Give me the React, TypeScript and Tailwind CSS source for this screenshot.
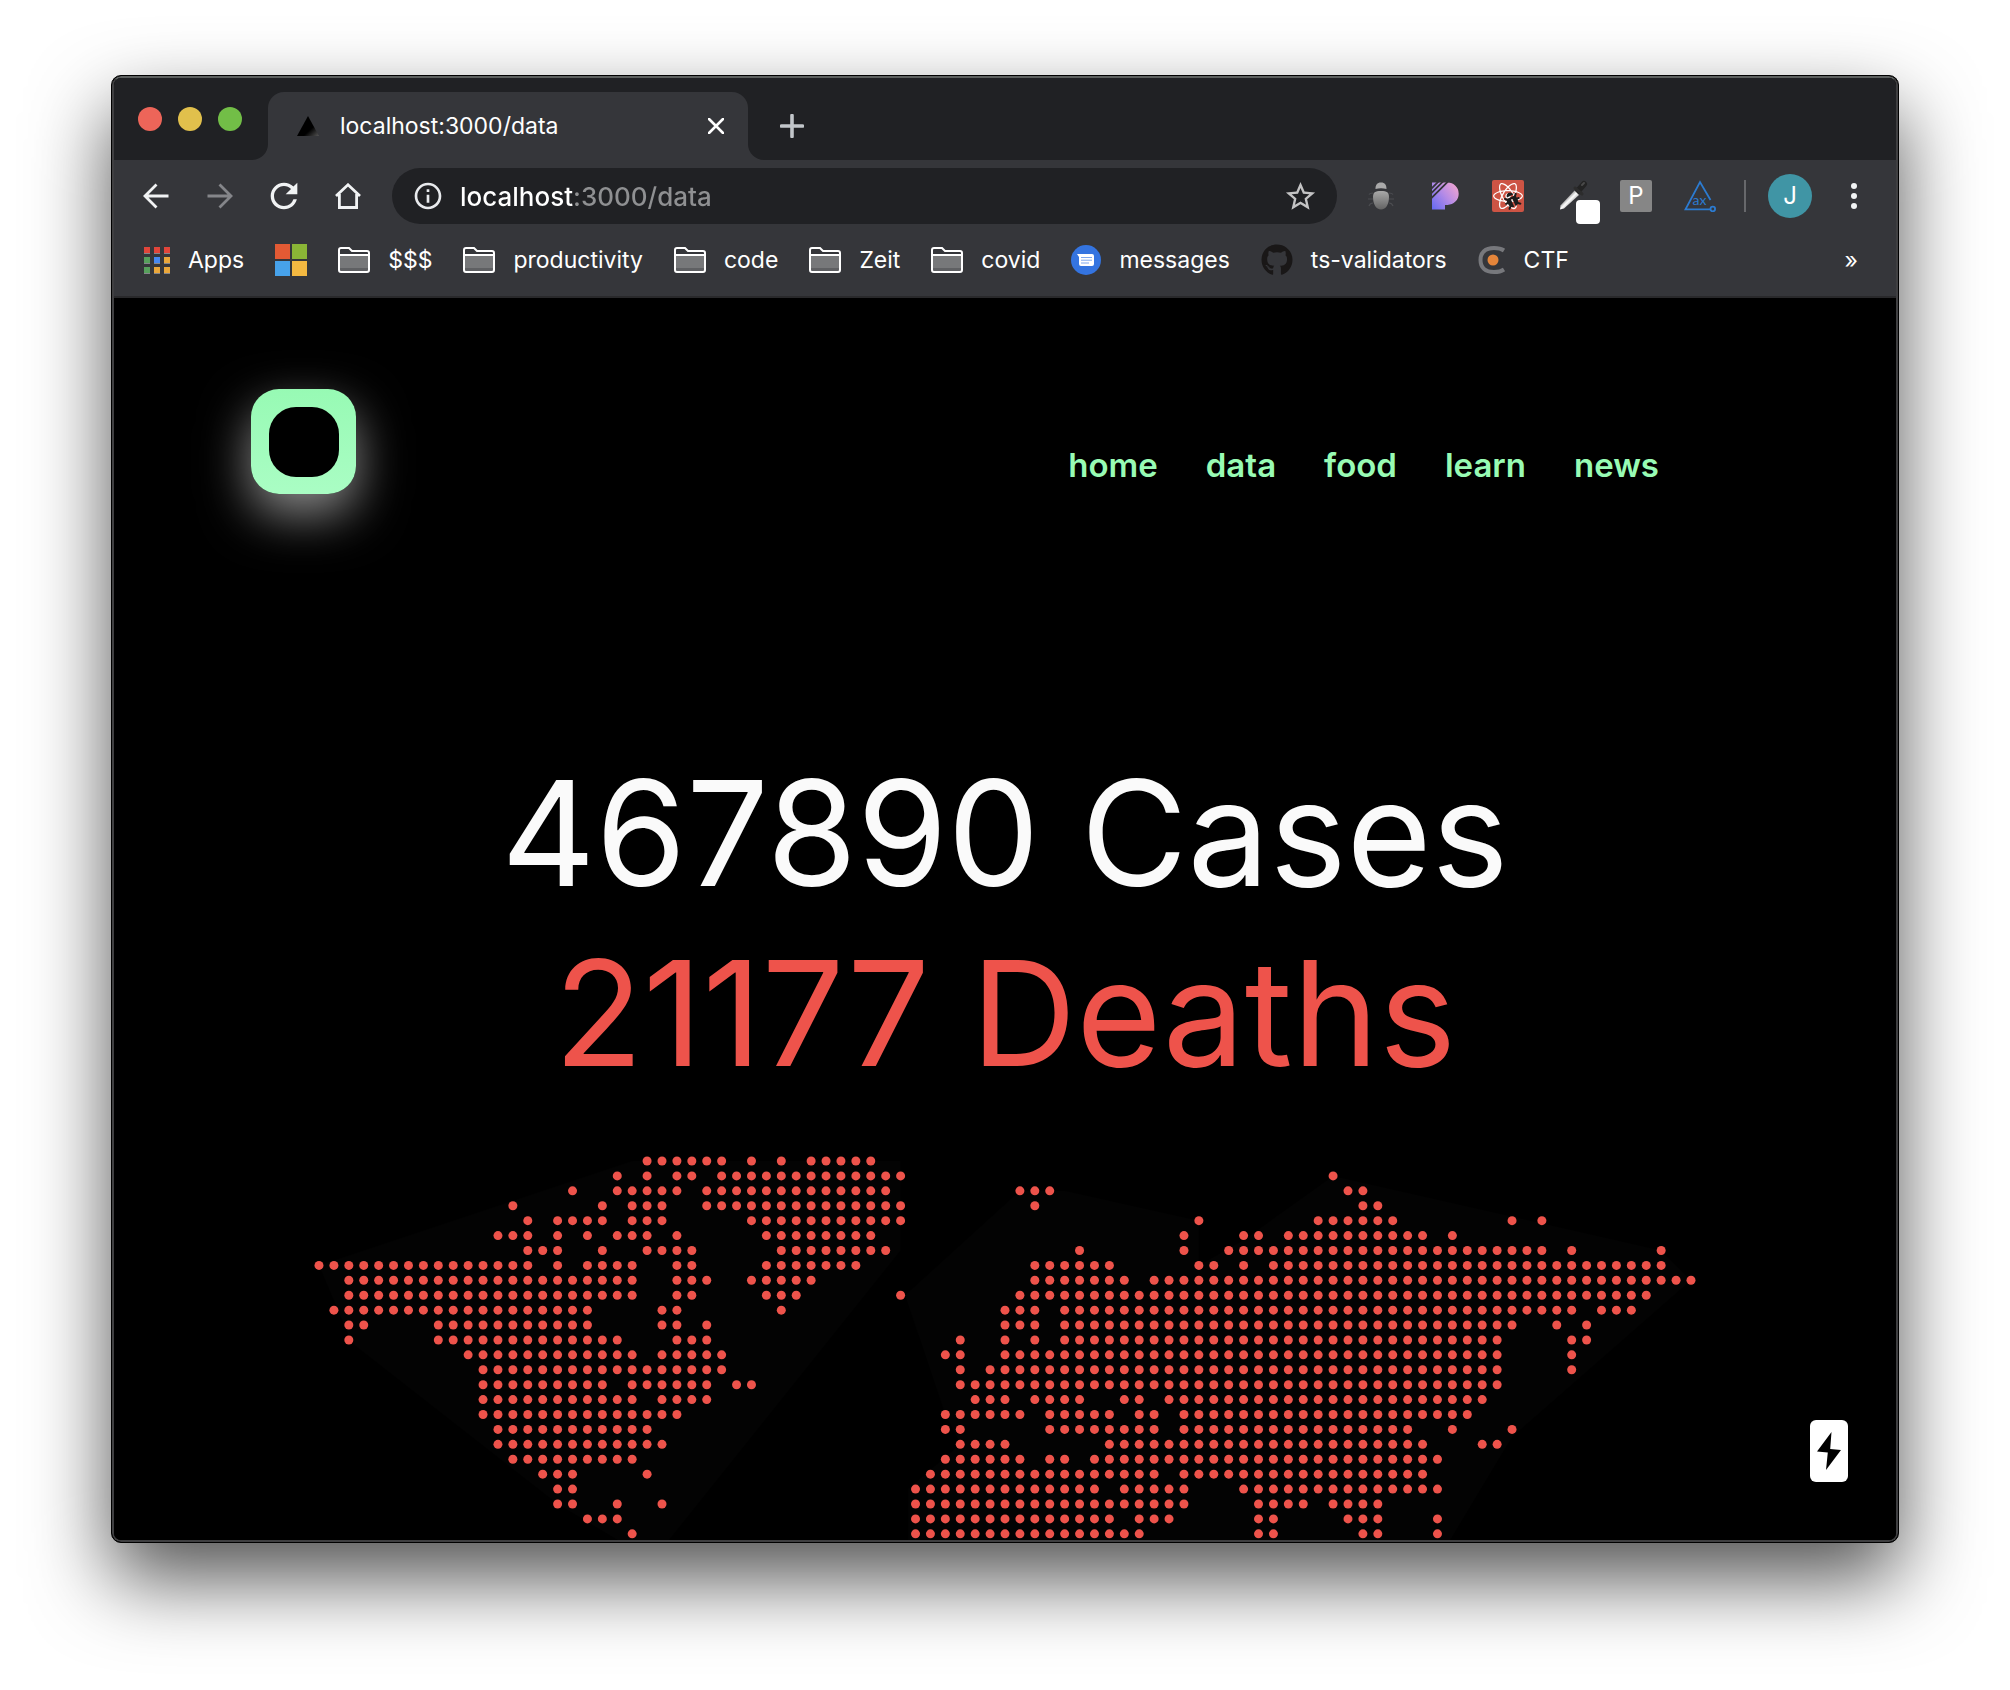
import React from 'react';
import { FaGithub, FaReact, FaBug } from 'react-icons/fa';
import { MdStarBorder, MdRefresh, MdOutlineInfo } from 'react-icons/md';

/* Land cells of the dotted world map: one entry per row, each a list of [first, last] columns. */
const MAP_ROWS: number[][][] = [
  [[22, 27], [29, 29], [31, 31], [33, 37]],
  [[20, 20], [22, 22], [24, 25], [27, 39], [68, 68]],
  [[17, 17], [20, 24], [26, 38], [47, 49], [69, 70]],
  [[13, 13], [19, 19], [21, 23], [26, 39], [48, 48], [70, 71]],
  [[14, 14], [16, 19], [21, 23], [29, 39], [59, 59], [67, 72], [80, 80], [82, 82]],
  [[12, 14], [16, 16], [18, 18], [20, 22], [24, 24], [30, 37], [58, 58], [62, 63], [65, 74], [76, 76]],
  [[14, 16], [19, 19], [22, 25], [31, 38], [51, 51], [58, 58], [61, 82], [84, 84], [90, 90]],
  [[0, 14], [16, 16], [18, 21], [24, 25], [30, 36], [48, 53], [59, 60], [62, 62], [64, 90]],
  [[2, 21], [24, 26], [29, 33], [48, 54], [56, 92]],
  [[2, 21], [24, 25], [30, 32], [39, 39], [47, 89]],
  [[1, 18], [23, 24], [31, 31], [46, 48], [50, 84], [86, 88]],
  [[2, 3], [8, 18], [23, 24], [26, 26], [46, 48], [50, 80], [83, 83], [85, 85]],
  [[2, 2], [8, 20], [24, 26], [43, 43], [46, 46], [48, 48], [50, 79], [84, 85]],
  [[10, 21], [23, 27], [42, 43], [46, 79], [84, 84]],
  [[11, 27], [43, 43], [45, 79], [84, 84]],
  [[11, 19], [21, 26], [28, 29], [43, 79]],
  [[11, 21], [23, 26], [44, 46], [48, 51], [54, 55], [57, 78]],
  [[11, 24], [42, 47], [49, 53], [55, 56], [58, 77]],
  [[12, 22], [42, 43], [49, 56], [58, 73], [76, 76], [80, 80]],
  [[12, 23], [43, 46], [53, 74], [78, 79]],
  [[13, 21], [42, 47], [49, 50], [52, 75]],
  [[15, 17], [22, 22], [41, 56], [58, 74]],
  [[16, 17], [40, 52], [54, 58], [62, 75]],
  [[16, 17], [20, 20], [23, 23], [40, 58], [63, 66], [68, 71]],
  [[18, 20], [40, 53], [55, 57], [63, 64], [69, 71], [75, 75]],
  [[21, 21], [40, 55], [63, 64], [70, 71], [75, 75]],
];

function WorldMap() {
  const pitch = 14.913;
  const dots: React.ReactElement[] = [];
  MAP_ROWS.forEach((ranges, row) =>
    ranges.forEach(([from, to]) => {
      for (let col = from; col <= to; col++) {
        dots.push(<circle key={`${row}-${col}`} cx={6 + col * pitch} cy={6 + row * pitch} r="4.5" />);
      }
    }),
  );
  const region = (points: number[][]) =>
    points.map(([c, r]) => `${6 + c * pitch},${6 + r * pitch}`).join(' ');
  return (
    <svg viewBox="0 0 1384 394" className="w-full max-w-[1384px] shrink-0" role="img" aria-label="World map">
      <g fill="#030303">
        <polygon points={region([[21, 0], [39, 0], [39, 6], [23, 26], [21, 26], [16, 23], [2.2, 12.2], [0, 7]])} />
        <polygon
          points={region([
            [39.3, 9], [47, 2], [50, 2], [59, 4], [59, 7], [62, 5.3], [68, 1], [90, 6], [92, 8],
            [80, 18.5], [75.5, 26], [39.5, 26], [39.5, 22], [43, 19], [42, 17],
          ])}
        />
      </g>
      <g fill="#ee534b">{dots}</g>
    </svg>
  );
}

function FolderIcon() {
  return (
    <svg viewBox="0 0 32 26" className="h-[26px] w-8 shrink-0" fill="none">
      <path d="M1 3a2 2 0 0 1 2-2h8l3 3h15a2 2 0 0 1 2 2v17a2 2 0 0 1-2 2H3a2 2 0 0 1-2-2z" fill="#35363a" />
      <path d="M2 9h28v15H2z" fill="#77787a" />
      <path d="M2 21h28v3H2z" fill="#5f6063" />
      <path d="M1 3a2 2 0 0 1 2-2h8l3 3h15a2 2 0 0 1 2 2v17a2 2 0 0 1-2 2H3a2 2 0 0 1-2-2zM1 8h30" stroke="#fff" strokeWidth="2" />
    </svg>
  );
}

function AppsIcon() {
  const colors = ['#e0453a', '#e0453a', '#e0453a', '#57a05c', '#4688f1', '#e9a63a', '#57a05c', '#e9a63a', '#e9a63a'];
  return (
    <svg viewBox="0 0 26 27" className="h-[27px] w-[26px] shrink-0">
      {colors.map((c, i) => (
        <g key={i}>
          <rect x={(i % 3) * 10} y={Math.floor(i / 3) * 10} width="6" height="7" fill="#85868a" />
          <rect x={(i % 3) * 10} y={Math.floor(i / 3) * 10} width="6" height="6" fill={c} />
        </g>
      ))}
    </svg>
  );
}

function MicrosoftIcon() {
  return (
    <svg viewBox="0 0 32 32" className="size-8 shrink-0">
      <path d="M0 0h15v15H0z" fill="#e25a34" />
      <path d="M17 0h15v15H17z" fill="#8ab536" />
      <path d="M0 17h15v15H0z" fill="#47a2ea" />
      <path d="M17 17h15v15H17z" fill="#f4b941" />
    </svg>
  );
}

function MessagesIcon() {
  return (
    <svg viewBox="0 0 30 30" className="size-[30px] shrink-0">
      <circle cx="15" cy="15" r="15" fill="#3474e0" />
      <path d="M6 9h15a2 2 0 0 1 2 2v8a2 2 0 0 1-2 2H10a2 2 0 0 1-2-2v-7z" fill="#fff" />
      <path d="M10 12.5h11M10 15.2h11M10 18h8" stroke="#7fa8ee" strokeWidth="1" />
    </svg>
  );
}

function CtfIcon() {
  return (
    <svg viewBox="0 0 28 28" className="size-7 shrink-0" fill="none">
      <path d="M26 4.500C23 2.500 20 2 16 2 7 2 2.500 6.500 2.500 14S7 26 16 26c4 0 7-.5 10-2.500" stroke="#77787c" strokeWidth="4" />
      <circle cx="15" cy="14" r="5.5" fill="#e5853a" />
    </svg>
  );
}

function Bookmark({ icon, label }: { icon: React.ReactNode; label?: string }) {
  return (
    <a href="#" aria-label={label ?? 'Microsoft'} className="flex items-center gap-[18px] whitespace-nowrap">
      {icon}
      {label && <span>{label}</span>}
    </a>
  );
}

function TabStrip() {
  return (
    <div className="flex h-[82px] items-end bg-[#202124]">
      <div className="mb-[29px] ml-6 flex gap-4">
        <button aria-label="Close window" className="size-6 rounded-full bg-[#ed6559]" />
        <button aria-label="Minimize window" className="size-6 rounded-full bg-[#e1c04c]" />
        <button aria-label="Zoom window" className="size-6 rounded-full bg-[#72be47]" />
      </div>
      <svg viewBox="0 0 16 16" className="ml-[10px] size-4 shrink-0">
        <path d="M16 0v16H0A16 16 0 0 0 16 0z" fill="#35363a" />
      </svg>
      <div className="flex h-[68px] w-[480px] items-center rounded-t-2xl bg-[#35363a] pr-6 pl-[29px]">
        <svg viewBox="0 0 22 20" className="h-5 w-[22px]">
          <defs>
            <linearGradient id="fav" x1="0.4" y1="0.4" x2="1" y2="1">
              <stop offset="0.4" stopColor="#000" />
              <stop offset="1" stopColor="#555" />
            </linearGradient>
          </defs>
          <path d="M11 0l11 20H0z" fill="url(#fav)" />
        </svg>
        <span className="ml-[21px] flex-1 text-[23px]">localhost:3000/data</span>
        <button aria-label="Close tab">
          <svg viewBox="0 0 16 16" className="size-4">
            <path d="M1 1l14 14M15 1L1 15" stroke="#fff" strokeWidth="2.6" strokeLinecap="round" />
          </svg>
        </button>
      </div>
      <svg viewBox="0 0 16 16" className="size-4 shrink-0">
        <path d="M0 0v16h16A16 16 0 0 1 0 0z" fill="#35363a" />
      </svg>
      <button aria-label="New tab" className="mb-[22px] ml-4">
        <svg viewBox="0 0 24 24" className="size-6">
          <path d="M12 1.5v21M1.5 12h21" stroke="#c2c6ca" strokeWidth="3.6" strokeLinecap="round" />
        </svg>
      </button>
    </div>
  );
}

function Toolbar() {
  return (
    <div className="flex h-[72px] items-center bg-[#35363a] pr-[39px] pl-[29px]">
      <button aria-label="Back" className="shrink-0">
        <svg viewBox="0 0 26 26" className="size-[26px]" fill="none" stroke="#f1f3f4" strokeWidth="2.8">
          <path d="M25.500 13H2M13.500 1.500L2 13l11.500 11.500" />
        </svg>
      </button>
      <button aria-label="Forward" className="ml-[38px] shrink-0">
        <svg viewBox="0 0 26 26" className="size-[26px]" fill="none" stroke="#85868a" strokeWidth="2.8">
          <path d="M.5 13H24M12.500 1.500L24 13 12.500 24.500" />
        </svg>
      </button>
      <button aria-label="Reload" className="ml-[31px] shrink-0">
        <MdRefresh className="size-10 text-[#f1f3f4]" />
      </button>
      <button aria-label="Home" className="ml-[31px] shrink-0">
        <svg viewBox="0 0 26 26" className="size-[26px]" fill="none" stroke="#f1f3f4" strokeWidth="2.8">
          <path d="M1 13L13 1.800 25 13M4.400 11v13.500h17.200V11" />
        </svg>
      </button>
      <div className="ml-[31px] flex h-14 flex-1 items-center rounded-full bg-[#202124] pr-[19px] pl-5">
        <MdOutlineInfo className="size-8 shrink-0 text-[#e8eaed]" />
        <input
          aria-label="Address"
          defaultValue="localhost:3000/data"
          className="ml-4 min-w-0 flex-1 bg-[linear-gradient(90deg,#ffffff_114px,#8f9092_114px)] bg-clip-text text-[26px] font-medium text-transparent outline-none"
        />
        <button aria-label="Bookmark this page">
          <MdStarBorder className="size-[35px] text-[#c3c3c4]" />
        </button>
      </div>
      <div className="ml-[30px] flex shrink-0 items-center">
        <svg viewBox="0 0 28 28" className="size-7">
          <defs>
            <linearGradient id="bug" x1="0" y1="0" x2="0" y2="1">
              <stop offset="0" stopColor="#a9a9a9" />
              <stop offset="1" stopColor="#636363" />
            </linearGradient>
          </defs>
          <path d="M6 11q-3 0-4 1.500M22 11q3 0 4 1.500M6 17H1M22 17h5M6 21q-3 0-4 3M22 21q3 0 4 3" stroke="#4c4d51" fill="none" strokeWidth="1.200" />
          <path d="M8.500 7C8.500 3 10 .5 14 .5S19.500 3 19.500 7Q14 5.500 8.500 7z" fill="#a9a9a9" />
          <path d="M14 9c6 0 8 1.500 8 6 0 7-3 12.500-8 12.500S6 22 6 15c0-4.500 2-6 8-6z" fill="url(#bug)" />
        </svg>
        <svg viewBox="0 0 28 28" className="ml-[37px] size-7">
          <defs>
            <linearGradient id="pp" x1="1" y1="0.100" x2="0" y2="0.900">
              <stop offset="0" stopColor="#f3a6cf" />
              <stop offset="0.500" stopColor="#b58be6" />
              <stop offset="1" stopColor="#6a6cf2" />
            </linearGradient>
          </defs>
          <path d="M0 .5h15.500a11.200 11.200 0 0 1 0 22.400H13v4.600H0z" fill="url(#pp)" />
          <path d="M-1 7L7-1M-1 11.500L11.500-1M-1 16.500L16.500-1" stroke="#35363a" strokeWidth="1.800" />
        </svg>
        <span className="relative ml-8 flex size-8 items-center justify-center rounded-xs bg-[#cd5444]">
          <FaReact className="size-[30px] text-white" />
          <FaBug className="absolute right-1 bottom-1 size-4 rotate-[-25deg] text-[#1d1d1d]" />
        </span>
        <span className="relative ml-[34px] size-8">
          <svg viewBox="0 0 32 32" className="size-8">
            <defs>
              <linearGradient id="pen" x1="0" y1="0" x2="1" y2="1">
                <stop offset="0.350" stopColor="#8a8a8a" />
                <stop offset="0.500" stopColor="#fff" />
                <stop offset="0.700" stopColor="#9a9a9a" />
              </linearGradient>
            </defs>
            <path d="M20 11l6-7" stroke="#232323" strokeWidth="6" strokeLinecap="round" />
            <path d="M17 8l7 6" stroke="#2c2c2c" strokeWidth="3" strokeLinecap="round" />
            <path d="M24 5l2-2" stroke="#4a4a4a" strokeWidth="2" strokeLinecap="round" />
            <path d="M16.500 10.500l4.500 4.500L6 28.500l-4 1 .5-4z" fill="url(#pen)" />
          </svg>
          <span className="absolute top-5 left-[18px] size-6 rounded-sm bg-white" />
        </span>
        <span className="ml-[30px] flex size-8 items-center justify-center rounded-xs bg-[#868686] text-[24px] text-white">P</span>
        <svg viewBox="0 0 32 32" className="ml-8 size-8" fill="none" stroke="#2c7bd0" strokeWidth="1.800">
          <path d="M26.500 20L16 2 1.500 29.300H26" />
          <circle cx="28.800" cy="29" r="2.300" />
          <text x="8.500" y="25" fill="#2c7bd0" stroke="none" fontSize="14" fontFamily="Lato">ax</text>
        </svg>
        <span className="ml-7 h-8 w-0.5 bg-[#67686b]" />
        <button className="ml-[22px] size-11 rounded-full bg-[#4095a5] text-[24px] text-white">J</button>
        <button aria-label="Menu" className="ml-[39px]">
          <svg viewBox="0 0 6 26" className="h-[26px] w-[6px]" fill="#f1f3f4">
            <circle cx="3" cy="3" r="3" />
            <circle cx="3" cy="13" r="3" />
            <circle cx="3" cy="23" r="3" />
          </svg>
        </button>
      </div>
    </div>
  );
}

function BookmarkBar() {
  return (
    <div className="flex h-[66px] items-center gap-[31px] border-b-2 border-[#29292b] bg-[#35363a] pr-[38px] pb-2 pl-[30px] text-[23px]">
      <Bookmark icon={<AppsIcon />} label="Apps" />
      <Bookmark icon={<MicrosoftIcon />} />
      <Bookmark icon={<FolderIcon />} label="$$$" />
      <Bookmark icon={<FolderIcon />} label="productivity" />
      <Bookmark icon={<FolderIcon />} label="code" />
      <Bookmark icon={<FolderIcon />} label="Zeit" />
      <Bookmark icon={<FolderIcon />} label="covid" />
      <Bookmark icon={<MessagesIcon />} label="messages" />
      <Bookmark icon={<FaGithub className="size-8 shrink-0 text-[#191717]" />} label="ts-validators" />
      <Bookmark icon={<CtfIcon />} label="CTF" />
      <button aria-label="More bookmarks" className="ml-auto">»</button>
    </div>
  );
}

export default function App() {
  return (
    <div className="flex h-screen flex-col bg-white px-[111px] pt-[75px] pb-[147px] font-['Inter',sans-serif] text-white">
      <div className="flex min-h-0 flex-1 flex-col overflow-hidden rounded-[10px] border border-black bg-black shadow-[0_36px_80px_rgba(0,0,0,0.68)]">
        <div className="flex min-h-0 flex-1 flex-col overflow-hidden rounded-[9px] border-2 border-[#3f3f41] border-t-[#5d605f]">
          <TabStrip />
          <Toolbar />
          <BookmarkBar />
          <main className="relative flex min-h-0 flex-1 flex-col overflow-hidden bg-black">
            <header className="flex shrink-0 justify-between pt-[91px] pr-[237px] pl-[137px]">
              <a
                href="#"
                aria-label="Logo"
                className="flex size-[105px] items-center justify-center rounded-[28px] bg-linear-to-b from-[#97fab4] to-[#aafdc4] shadow-[0_20px_50px_rgba(255,255,255,0.55)]"
              >
                <span className="size-[70px] rounded-[27px] bg-black" />
              </a>
              <nav className="mt-[53px] flex gap-12 text-[33px] leading-[46px] font-semibold text-[#98fbb4]">
                <a href="#">home</a>
                <a href="#">data</a>
                <a href="#">food</a>
                <a href="#">learn</a>
                <a href="#">news</a>
              </nav>
            </header>
            <section className="mt-[249px] flex flex-col items-center text-[146px] leading-[180px]">
              <h1 className="text-[#fafafa]">467890 Cases</h1>
              <h2 className="text-[#ee534b]">21177 Deaths</h2>
            </section>
            <div className="mt-13 flex justify-center">
              <WorldMap />
            </div>
            <button
              aria-label="Prerender status"
              className="absolute right-12 bottom-[58px] flex h-[62px] w-[38px] items-center justify-center rounded-md bg-white"
            >
              <svg viewBox="0 0 24 38" className="h-[38px] w-6" fill="#000">
                <path d="M14.500 0L0 19.500l10.800 1L9 38l15-20-10.800-1z" />
              </svg>
            </button>
          </main>
        </div>
      </div>
    </div>
  );
}
